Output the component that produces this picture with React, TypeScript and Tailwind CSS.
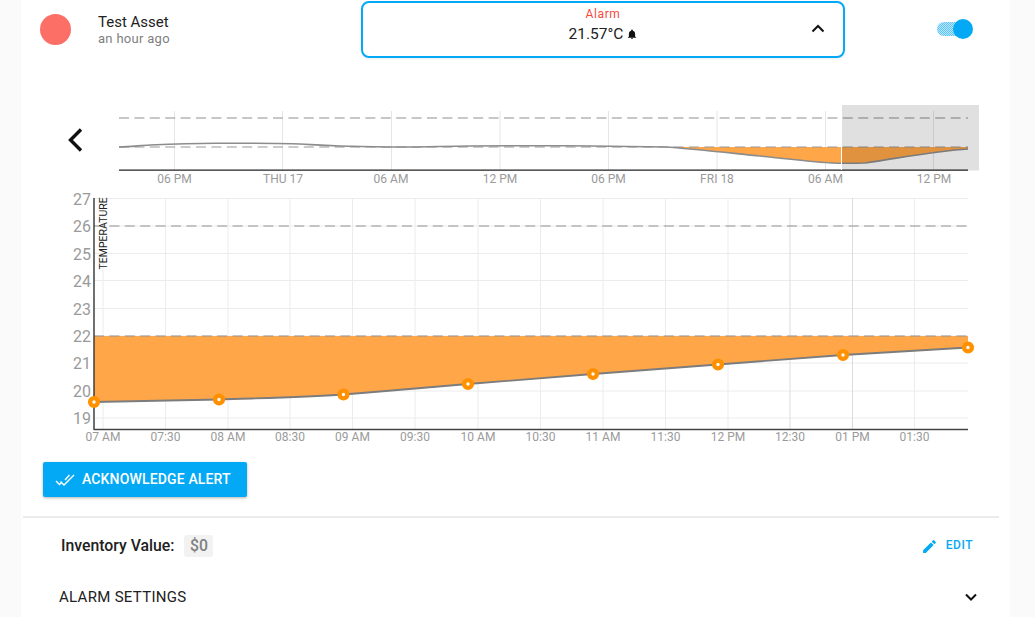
import React from "react";

const font = "font-['Roboto',sans-serif]";

function MiniChart() {
  const grid = [174.5, 282.5, 391.5, 500, 608.5, 717, 825.5, 933.5];
  const labels: [number, string][] = [
    [174.5, "06 PM"], [283, "THU 17"], [391, "06 AM"], [500, "12 PM"], [608.5, "06 PM"], [717, "FRI 18"], [825.5, "06 AM"], [934, "12 PM"],
  ];
  const head = "M119 147 C130 146.8 140 145.5 150 145 C170 144.2 195 143.4 215 143.3 C250 143.1 285 143.2 300 144 C312 144.6 320 145.6 340 146 C360 146.4 385 147 400 147 C425 147 445 146.2 470 146 C500 145.8 535 145.6 565 145.8 C600 146 640 146.4 665 147";
  const tail = "C690 148.5 730 153 760 156 C790 159 815 162.5 832 163 C845 163.4 855 163.2 865 163 C900 158 935 151 968 149";
  const line = `${head} ${tail}`;
  const area = `M665 147 ${tail} L968 147 Z`;
  return (
    <svg width="1035" height="88" viewBox="0 100 1035 88" className="block">
      {grid.map((x) => <line key={x} x1={x} x2={x} y1="111" y2="170" stroke="#e6e6e6" strokeWidth="1" />)}
      <path d={area} fill="#ffa748" />
      <line x1="119" x2="968" y1="118" y2="118" stroke="#909090" strokeWidth="1.2" strokeDasharray="10 5.4" />
      <line x1="119" x2="968" y1="147" y2="147" stroke="#989898" strokeWidth="1.2" strokeDasharray="10 5.4" />
      <path d={line} fill="none" stroke="#8c8c8c" strokeWidth="1.6" />
      <line x1="119" x2="968" y1="170.2" y2="170.2" stroke="#222" strokeWidth="1.2" />
      <rect x="841.5" y="105" width="137.5" height="65.5" fill="#000" fillOpacity="0.12" />
      <line x1="841.5" x2="841.5" y1="105" y2="170" stroke="#fff" strokeWidth="1" />
      {labels.map(([x, t]) => (
        <text key={t + x} x={x} y="183" textAnchor="middle" fontSize="12" fill="#9a9a9a" fontFamily="Roboto">{t}</text>
      ))}
    </svg>
  );
}

function MainChart() {
  const ys: [number, number][] = [[27, 198.5], [26, 226], [25, 253.5], [24, 280.5], [23, 308.5], [22, 336], [21, 363], [20, 391], [19, 418]];
  const xs: [number, string][] = [
    [103, "07 AM"], [165.5, "07:30"], [228, "08 AM"], [290, "08:30"], [352.5, "09 AM"], [415, "09:30"], [478, "10 AM"], [540.5, "10:30"],
    [603, "11 AM"], [665.5, "11:30"], [728, "12 PM"], [790, "12:30"], [852.5, "01 PM"], [914.5, "01:30"],
  ];
  const pts: [number, number][] = [[94, 402], [219, 399.5], [343.5, 394.5], [468, 384], [593, 374], [718, 364.5], [843, 355], [968, 347.5]];
  const line = "M94 402 L219 399.5 C265 398 305 397.5 343.5 394.5 C385 391 430 387.5 468 384 L593 374 L718 364.5 L843 355 L968 347.5";
  return (
    <svg width="1035" height="262" viewBox="0 188 1035 262" className="block">
      {ys.map(([v, y]) => <line key={v} x1="94" x2="968" y1={y} y2={y} stroke="#ececec" strokeWidth="1" />)}
      {xs.map(([x, t]) => (
        <line key={t} x1={x} x2={x} y1="198" y2="429" stroke={t === "12:30" || t === "01 PM" ? "#dcdcdc" : "#ececec"} strokeWidth="1" />
      ))}
      <path d={line + " L968 336 L94 336 Z"} fill="#ffa748" />
      <line x1="94" x2="968" y1="226" y2="226" stroke="#929292" strokeWidth="1.2" strokeDasharray="10 5.4" />
      <line x1="94" x2="968" y1="336" y2="336" stroke="#929292" strokeWidth="1.2" strokeDasharray="10 5.4" />
      <path d={line} fill="none" stroke="#7c7c7c" strokeWidth="1.8" />
      <line x1="94" x2="94" y1="198" y2="430" stroke="#333" strokeWidth="1.4" />
      <line x1="94" x2="968" y1="429.5" y2="429.5" stroke="#444" strokeWidth="1.6" />
      {ys.map(([v, y]) => (
        <text key={v} x="91" y={y + 6} textAnchor="end" fontSize="16" fill="#9a9a9a" fontFamily="Roboto">{v}</text>
      ))}
      {xs.map(([x, t]) => (
        <text key={t} x={x} y="441" textAnchor="middle" fontSize="12" fill="#9a9a9a" fontFamily="Roboto">{t}</text>
      ))}
      <text transform="translate(107,269.5) rotate(-90)" fontSize="10.5" fill="#222" fontFamily="Roboto">TEMPERATURE</text>
      {pts.map(([x, y]) => <circle key={x} cx={x} cy={y} r="3.9" fill="#fff" stroke="#ff9100" strokeWidth="4.4" />)}
    </svg>
  );
}

export default function App() {
  return (
    <div className={`${font} w-[1035px] h-[617px] overflow-hidden bg-[#fafafa]`}>
      <div className="w-[989px] h-full ml-[21px] bg-white">
        <div className="relative w-[989px]">
          <div className="flex items-start h-[57px] pt-[1px]">
            <div className="w-[31px] h-[31px] rounded-full bg-[#fb6f66] ml-[19px] mt-[13px] shrink-0" />
            <div className="ml-[27px] mt-[12px] w-[263px] shrink-0">
              <div className="text-[15px] leading-[18px] text-[#212121]">Test Asset</div>
              <div className="text-[13px] leading-[16px] text-[#808080] tracking-[0.3px]">an hour ago</div>
            </div>
            <div className="w-[484px] h-[57px] shrink-0 border-2 border-[#03a9f4] rounded-[8px] flex items-center relative shadow-[0_1px_3px_rgba(0,0,0,0.08)]">
              <div className="flex-1 flex flex-col items-center mt-[-6px]">
                <div className="text-[12px] leading-[15px] text-[#f5493c] tracking-[0.6px]">Alarm</div>
                <div className="flex items-center text-[15.5px] leading-[24px] text-[#212121] gap-[4px]">
                  21.57°C
                  <svg width="10" height="11" viewBox="0 0 24 24" fill="#111"><path d="M12 23c1.3 0 2.4-1 2.4-2.3H9.6C9.6 22 10.7 23 12 23zm7.5-6.5V10.6c0-3.6-2-6.6-5.5-7.4v-.8C14 1.1 13.1 0 12 0s-2 1.1-2 2.4v.8c-3.5.8-5.5 3.8-5.5 7.4v5.9L2 19v1h20v-1l-2.5-2.5z" /></svg>
                </div>
              </div>
              <svg className="absolute right-[17px] top-[18px]" width="16" height="16" viewBox="0 0 16 16" fill="none" stroke="#111" strokeWidth="2"><path d="M2.5 10.5 8 5l5.5 5.5" /></svg>
            </div>
            <div className="relative ml-[92px] mt-[21px] w-[36px] h-[20px]">
              <div className="absolute left-0 top-[0px] w-[28px] h-[14px] rounded-full bg-[repeating-conic-gradient(#5cc4f7_0_25%,#b8e6fc_0_50%)] bg-[length:2px_2px]" />
              <div className="absolute left-[16px] top-[-3px] w-[20px] h-[20px] rounded-full bg-[#03a9f4]" />
            </div>
          </div>
          <svg className="absolute left-[45px] top-[128px]" width="20" height="24" viewBox="0 0 20 24" fill="none" stroke="#111" strokeWidth="3.4"><path d="M15 1.5 4.5 12 15 22.5" /></svg>
        </div>
        <div className="ml-[-21px] mt-[43px]"><MiniChart /></div>
        <div className="ml-[-21px]"><MainChart /></div>
        <button className="ml-[22px] mt-[12px] w-[204px] h-[35px] bg-[#03a9f4] rounded-[2px] text-white text-[14px] font-medium tracking-[0.15px] flex items-center shadow-[0_1px_3px_rgba(0,0,0,0.3)]">
          <svg className="ml-[12px] mr-[6px]" width="21" height="14" viewBox="0 0 21 14" fill="none" stroke="#fff" strokeWidth="1.4"><path d="M1 8l3.5 3.5L7 9M5.5 8.5 9 12 19 2M10 7l4.5-5" /></svg>
          ACKNOWLEDGE ALERT
        </button>
        <div className="ml-[2px] w-[976px] mt-[19px] h-[2px] bg-[#ebebeb]" />
        <div className="flex items-center h-[24px] mt-[16px] ml-[40px] w-[912px]">
          <span className="text-[15.8px] font-medium text-[#212121]">Inventory Value:</span>
          <span className="ml-[10px] px-[5.5px] h-[22px] leading-[22px] rounded-[3px] bg-[#f2f2f2] text-[15.8px] font-medium text-[#808080]">$0</span>
          <div className="ml-auto flex items-center text-[#03a9f4] text-[12px] font-medium tracking-[0.5px] mt-[-2px]">
            <svg width="17" height="17" viewBox="0 0 24 24" fill="#03a9f4" className="mt-[2px]"><path d="M3 17.25V21h3.75L17.81 9.94l-3.75-3.75L3 17.25zM20.71 7.04a1 1 0 0 0 0-1.41l-2.34-2.34a1 1 0 0 0-1.41 0l-1.83 1.83 3.75 3.75 1.83-1.83z" /></svg>
            <span className="ml-[8px]">EDIT</span>
          </div>
        </div>
        <div className="flex items-center justify-between mt-[29px] ml-[38px] w-[919px] h-[20px]">
          <span className="text-[15px] text-[#212121] tracking-[0.3px]">ALARM SETTINGS</span>
          <svg width="14" height="14" viewBox="0 0 14 14" fill="none" stroke="#111" strokeWidth="2"><path d="M2 4.5 7 9.5l5-5" /></svg>
        </div>
      </div>
    </div>
  );
}
